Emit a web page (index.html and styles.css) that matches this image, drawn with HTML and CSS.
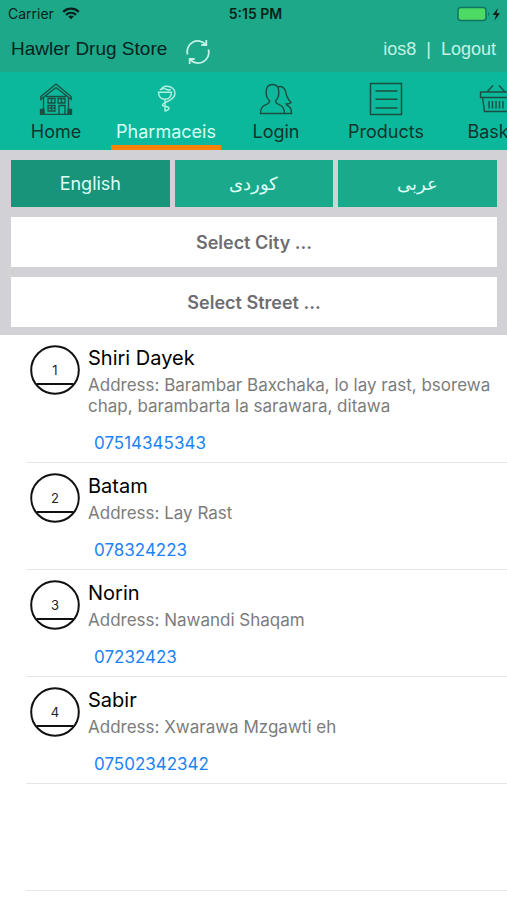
FILE: index.html
```html
<!DOCTYPE html>
<html lang="en">
<head>
<meta charset="utf-8">
<meta name="viewport" content="width=device-width, initial-scale=1">
<title>Hawler Drug Store</title>
<link rel="stylesheet" href="styles.css">
</head>
<body>
<header class="header">
  <div class="status">
    <span class="carrier">Carrier
      <svg width="18" height="13" viewBox="0 0 18 13" aria-hidden="true" fill="none" stroke="#0a1f1a" stroke-width="2.3"><path d="M1.2 4.8C5.600 .6 12.400 .6 16.800 4.800M4 7.800c2.900-2.700 7.100-2.700 10 0"/><path d="M9 12.300 6.200 9.500c1.600-1.400 4-1.400 5.600 0Z" fill="#0a1f1a" stroke="none"/></svg>
    </span>
    <span class="time">5:15 PM</span>
    <span class="power">
      <svg width="46" height="16" viewBox="0 0 46 16" aria-hidden="true"><rect x="1" y="1.500" width="28" height="13" rx="3" fill="#4cd964" stroke="#12765f" stroke-width="1.500"/><path d="M31 6v4c1.600-.5 1.600-3.500 0-4Z" fill="#12765f"/><path d="M41 2 35.500 9H39l-1.500 5.500L43 7.300h-3.500Z" fill="#0a1f1a"/></svg>
    </span>
  </div>
  <div class="titlebar">
    <h1 class="title">Hawler Drug Store</h1>
    <button class="refresh" aria-label="Refresh">
      <svg width="26" height="26" viewBox="0 0 26 26" aria-hidden="true" fill="none" stroke="#c4f2e6" stroke-width="1.800"><path d="M2.500 15.500A10.800 10.800 0 0 1 20.800 5.300M23.500 10.500A10.800 10.800 0 0 1 5.200 20.700"/><path d="M21.300 1v5h-5M4.700 25v-5h5"/></svg>
    </button>
    <div class="account"><a href="#user">ios8</a><span>|</span><a href="#logout">Logout</a></div>
  </div>
</header>
<nav class="tabs">
  <a class="tab" href="#home">
    <svg class="icon" viewBox="0 0 34 34" aria-hidden="true" fill="none" stroke="#1d4d40" stroke-width="1.300"><path d="M1.800 14.500 17 2l15.200 12.500v2.800L17 5.500 1.800 17.300Z"/><path d="M4.500 16v16M29.500 16v16M1.500 32.300h31M7 14.500h20"/><path d="M9 16.500h7v4.500H9ZM19 16.500h7v4.500h-7ZM12.500 16.500v4.500M22.500 16.500v4.500M9 23.500h7V29H9ZM12.500 23.500V29M9 26.200h7M20 32v-8.500h6V32"/><path d="M1.500 27.500h3.500v4.500H1.500ZM29 27.500h3.500v4.500H29Z" fill="#1d4d40"/></svg>
    <span>Home</span>
  </a>
  <a class="tab active" href="#pharmacies" aria-current="page">
    <svg class="icon" viewBox="0 0 34 34" aria-hidden="true" fill="none" stroke="#b5f1e2" stroke-width="1.400"><path d="M8.800 10.200h14.400M9.500 10.500c.3 4.200 3 6.700 6.500 6.700s6.200-2.500 6.500-6.700M16 17.200v12.300"/><path d="M12.500 7.800c.5-2.400 3-3.500 5.500-3.500 4.500 0 8 2.800 8 6.700 0 4.500-4 7-7.500 8.500-2.500 1-5 1.800-5 3.500 0 2.200 6.500.7 6.500 3.200 0 1.400-1.800 2.200-3.800 2.800"/><path d="M11 8c1-1.500 4-1.800 6-.8s4 1.300 4.500 0"/></svg>
    <span>Pharmaceis</span>
  </a>
  <a class="tab" href="#login">
    <svg class="icon" viewBox="0 0 34 34" aria-hidden="true" fill="none" stroke="#1d4d40" stroke-width="1.400"><path d="M1.500 31.500c0-5 1.500-7.500 5-8.700 3-1 4-2 4-4C8.500 17 7 13.500 7.200 9.500 7.300 5 9.500 2.500 13.500 2.500S19.700 5 19.800 9.500c.2 4-1.300 7.500-3.300 9.300 0 2 1 3 4 4 3.500 1.200 5 3.700 5 8.700Z"/><path d="M18.500 5.200c4-1.800 7.500.5 8.300 5 .7 5 2.700 7.800 5.200 10.300-1.200 1.300-3 1.700-4.800 1.500.3 1.200 1.300 1.700 2.500 2.300 2.300 1.200 2.800 3.500 2.800 7.200h-7"/></svg>
    <span>Login</span>
  </a>
  <a class="tab" href="#products">
    <svg class="icon" viewBox="0 0 34 34" aria-hidden="true" fill="none" stroke="#1d4d40" stroke-width="1.500"><path d="M1.500 1.500h31v31h-31ZM6.500 9h22M6.500 17.300h22M6.500 26h22"/></svg>
    <span>Products</span>
  </a>
  <a class="tab" href="#basket">
    <svg class="icon" viewBox="0 0 34 34" aria-hidden="true" fill="none" stroke="#1d4d40" stroke-width="1.400"><path d="M1.500 10h31v5.500h-31ZM3.500 15.500l2 14h23l2-14M8 10l6-6.500M26 10l-6-6.500M10 19v7.500M13.500 19v7.500M17 19v7.500M20.500 19v7.500M24 19v7.500"/></svg>
    <span>Basket</span>
  </a>
</nav>
<main>
  <section class="filters">
    <div class="languages">
      <button class="lang selected">English</button>
      <button class="lang" lang="ckb">كوردی</button>
      <button class="lang" lang="ar">عربی</button>
    </div>
    <select class="picker" aria-label="City"><option>Select City ...</option></select>
    <select class="picker" aria-label="Street"><option>Select Street ...</option></select>
  </section>
  <ul class="list">
    <li class="item">
      <svg class="badge" viewBox="0 0 50 50" aria-hidden="true"><circle cx="25" cy="25" r="23.800"/><path d="M6.500 39h37"/><text x="25" y="29.500">1</text></svg>
      <div class="info"><h2>Shiri Dayek</h2><p>Address: Barambar Baxchaka, lo lay rast, bsorewa chap, barambarta la sarawara, ditawa</p><a href="tel:07514345343">07514345343</a></div>
    </li>
    <li class="item">
      <svg class="badge" viewBox="0 0 50 50" aria-hidden="true"><circle cx="25" cy="25" r="23.800"/><path d="M6.500 39h37"/><text x="25" y="29.500">2</text></svg>
      <div class="info"><h2>Batam</h2><p>Address: Lay Rast</p><a href="tel:078324223">078324223</a></div>
    </li>
    <li class="item">
      <svg class="badge" viewBox="0 0 50 50" aria-hidden="true"><circle cx="25" cy="25" r="23.800"/><path d="M6.500 39h37"/><text x="25" y="29.500">3</text></svg>
      <div class="info"><h2>Norin</h2><p>Address: Nawandi Shaqam</p><a href="tel:07232423">07232423</a></div>
    </li>
    <li class="item">
      <svg class="badge" viewBox="0 0 50 50" aria-hidden="true"><circle cx="25" cy="25" r="23.800"/><path d="M6.500 39h37"/><text x="25" y="29.500">4</text></svg>
      <div class="info"><h2>Sabir</h2><p>Address: Xwarawa Mzgawti eh</p><a href="tel:07502342342">07502342342</a></div>
    </li>
    <li class="item" aria-hidden="true"></li>
  </ul>
</main>
</body>
</html>
```
FILE: styles.css
```css
* { box-sizing: border-box; }
body {
  margin: 0;
  background: #fff;
  color: #111;
  font-family: Inter, "Noto Sans", sans-serif;
  overflow-x: hidden;
}
a { text-decoration: none; }
button, select { font: inherit; border: 0; border-radius: 0; }

.header { background: #1da88a; height: 72px; }
.status {
  display: grid;
  grid-template-columns: 1fr auto 1fr;
  align-items: center;
  height: 27px;
  padding: 0 4px 0 8px;
  font-size: 14px;
  color: #0a1f1a;
}
.carrier { display: flex; align-items: center; gap: 8px; }
.time { font-weight: 600; }
.power { display: flex; justify-content: flex-end; }
.titlebar {
  display: flex;
  align-items: center;
  height: 44px;
  padding: 0 11px;
  font-family: "Liberation Sans", sans-serif;
}
.title { margin: 0; font-size: 19px; font-weight: 400; line-height: 44px; color: #06231c; }
.refresh { display: flex; margin-left: 18px; padding: 6px 0 0; background: none; }
.account { display: flex; gap: 10px; margin-left: auto; font-size: 18px; color: #c4f2e6; }
.account a { color: inherit; }

.tabs { display: flex; height: 78px; overflow: hidden; background: #0bb89b; padding-left: 1px; }
.tab {
  flex: 0 0 110px;
  display: flex;
  flex-direction: column;
  align-items: center;
  gap: 4px;
  padding-top: 10px;
  border-bottom: 5px solid transparent;
  font-size: 18px;
  line-height: 24px;
  color: #12342b;
}
.tab.active { color: #d8fff5; border-color: #fb8209; }
.icon { width: 34px; height: 34px; }

.filters {
  display: flex;
  flex-direction: column;
  gap: 10px;
  padding: 10px 10px 8px 11px;
  background: #d1d1d6;
}
.languages { display: grid; grid-template-columns: repeat(3, 1fr); gap: 5px; }
.lang { height: 47px; padding: 0; font-size: 18px; color: #dcfff6; background: #1ba98b; }
.lang.selected { background: #17947a; }
.picker {
  appearance: none;
  width: 100%;
  height: 50px;
  padding: 0;
  background: #fff;
  color: #6d6d72;
  font-size: 18px;
  font-weight: 600;
  text-align: center;
  text-align-last: center;
}

.list { list-style: none; margin: 0; padding: 0 0 0 26px; }
.item {
  display: flex;
  align-items: flex-start;
  gap: 8px;
  min-height: 107px;
  padding: 10px 16px 7px 4px;
  border-bottom: 1px solid #e6e6e8;
}
.badge { flex: none; width: 50px; height: 50px; fill: none; stroke: #111; stroke-width: 2; }
.badge text { fill: #222; stroke: none; font-size: 13px; text-anchor: middle; }
.info h2 { margin: 0 0 4px; font-size: 20px; font-weight: 400; line-height: 26px; color: #000; }
.info p { margin: 0; font-size: 17px; line-height: 21px; color: #7c7c7c; }
.info a { display: block; margin: 14px 0 0 6px; font-size: 17px; line-height: 24px; color: #1b83f5; }
```
